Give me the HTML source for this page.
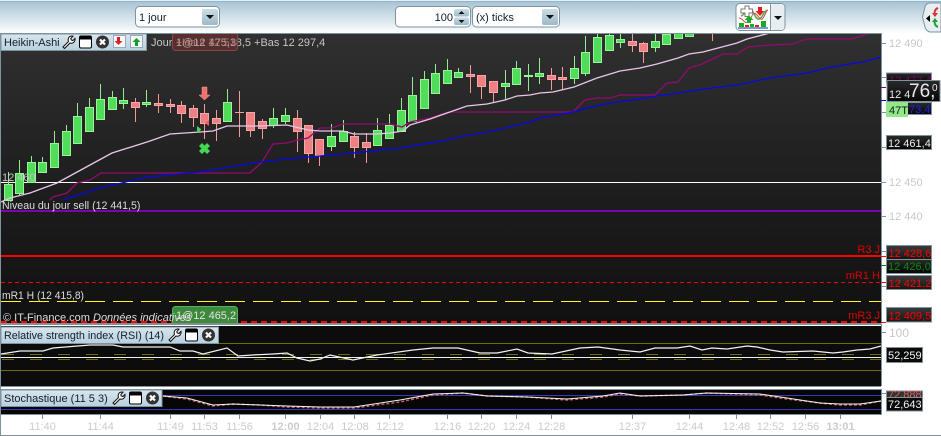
<!DOCTYPE html>
<html><head><meta charset="utf-8"><style>
html,body{margin:0;padding:0;background:#fff;width:941px;height:436px;overflow:hidden}
svg{display:block;font-family:"Liberation Sans",sans-serif;font-size:11px}
.ax{fill:#c9c9c9}.ax2{fill:#cccccc;text-anchor:middle}
.w{fill:#dcdcdc}.r{fill:#ff0000}.t{fill:#10202c}
</style></head><body>
<svg width="941" height="436" viewBox="0 0 941 436" xmlns="http://www.w3.org/2000/svg">
<defs>
<linearGradient id="tb" x1="0" y1="0" x2="0" y2="1"><stop offset="0" stop-color="#a5c0d0"/><stop offset=".5" stop-color="#d0e0e8"/><stop offset="1" stop-color="#fdfefe"/></linearGradient>
<linearGradient id="bg" x1="0" y1="0" x2="0" y2="1"><stop offset="0" stop-color="#303030"/><stop offset=".55" stop-color="#1d1d1d"/><stop offset="1" stop-color="#101010"/></linearGradient>
<linearGradient id="btn" x1="0" y1="0" x2="0" y2="1"><stop offset="0" stop-color="#cbdde7"/><stop offset="1" stop-color="#9db9ca"/></linearGradient>
<linearGradient id="tab" x1="0" y1="0" x2="0" y2="1"><stop offset="0" stop-color="#d8e6ee"/><stop offset="1" stop-color="#b8d0de"/></linearGradient>
<linearGradient id="lb" x1="0" y1="0" x2="0" y2="1"><stop offset="0" stop-color="#2a2a2a"/><stop offset="1" stop-color="#050505"/></linearGradient>
<linearGradient id="lr" x1="0" y1="0" x2="0" y2="1"><stop offset="0" stop-color="#3a3a3a"/><stop offset="1" stop-color="#151515"/></linearGradient>
<g id="wr"><path d="M1 12 L6.500 6.500 C5.500 3.500 7 1 10 1 L11 1.200 L8.800 3.500 L9.200 5 L11 5.500 L13 3.300 C13.500 6.500 11 9 8 8 L2.500 13.500 Z" fill="#fff" stroke="#111" stroke-width="1"/></g>
<g id="wn"><rect x="0.500" y="0.500" width="12" height="12" rx="1.500" fill="#fff" stroke="#000"/><rect x="1" y="1" width="11" height="3" fill="#000"/></g>
<g id="cl"><circle cx="6.500" cy="6.500" r="6.500" fill="#333"/><path d="M4 4L9 9M9 4L4 9" stroke="#fff" stroke-width="2.200"/></g>
</defs>

<!-- toolbar -->
<rect width="941" height="33" fill="url(#tb)"/>
<rect width="941" height="1" fill="#e8f0f4"/>
<rect y="1" width="941" height="1" fill="#8db6d0"/>
<rect x="881" y="33" width="60" height="403" fill="#fff"/>

<rect x="135.500" y="6.500" width="84" height="20.500" rx="4" fill="#fff" stroke="#7f939f"/>
<rect x="202" y="9" width="16" height="16" rx="2" fill="url(#btn)"/>
<path d="M206 15h8l-4 4z" fill="#111"/>
<text x="139" y="21" class="t">1 jour</text>

<rect x="395.500" y="6.500" width="75" height="20.500" rx="4" fill="#fff" stroke="#7f939f"/>
<rect x="454" y="9" width="15" height="7.500" rx="2" fill="url(#btn)"/>
<rect x="454" y="17.500" width="15" height="7.500" rx="2" fill="url(#btn)"/>
<path d="M458.500 14h6l-3-3zM458.500 20h6l-3 3z" fill="#111"/>
<text x="453" y="21" text-anchor="end" class="t">100</text>
<rect x="472.500" y="6.500" width="87" height="20.500" rx="4" fill="#fff" stroke="#7f939f"/>
<rect x="542" y="9" width="16" height="16" rx="2" fill="url(#btn)"/>
<path d="M546 15h8l-4 4z" fill="#111"/>
<text x="476" y="21" class="t">(x) ticks</text>

<rect x="736" y="3.500" width="49" height="27" rx="4" fill="#fff" stroke="#7f939f"/>
<rect x="771" y="4" width="13.500" height="26" rx="3" fill="#e6eef2"/>
<path d="M770.500 4v26" stroke="#7f939f"/>
<path d="M774 16h8l-4 4z" fill="#111"/>
<path d="M741 16c4-1 5-8 9-7s5 11 9 10 4-8 9-9" fill="none" stroke="#56b04e" stroke-width="1.600"/>
<path d="M739 18c4 0 5 6 9 4s4-13 9-7 5 7 10-5" fill="none" stroke="#d05050" stroke-width="1"/>
<path d="M741 9h4V6h4v3h3.500v4H749v3.500h-4V13h-4z" fill="#fff" stroke="#777"/>
<path d="M758 11V7h4v4h2.500l-4.500 5-4.500-5z" fill="#e02020"/>
<path d="M747 23v-3h-2.500l4.500-4.500 4.500 4.500H751v3z" fill="#10b020"/>
<path d="M739 23h5v4h-5zM750 24h4v3h-4zM761 21h5v6h-5z" fill="#10b020"/><path d="M745 25h4v2h-4zM755 25h4v2h-4z" fill="#e02020"/>
<rect x="738" y="27.500" width="30" height="1" fill="#0030a0"/>

<path d="M941 3h-11q-4 0-5 4l-2.500 10 2.500 10q1 4 5 5h11z" fill="#e6eef2" stroke="#7f939f"/>
<path d="M930 15v7l-4-3.500z" fill="#000"/>
<path d="M938 8c-3 1-4 4-3 8" fill="none" stroke="#e03030" stroke-width="2"/><path d="M932 13h6l-3 4z" fill="#e03030"/>
<path d="M938 27c-3-1-4-4-3-8" fill="none" stroke="#20a030" stroke-width="2"/><path d="M932 22h6l-3-4z" fill="#20a030"/>

<!-- main chart -->
<rect x="1" y="33.500" width="880" height="290" fill="url(#bg)"/>
<path d="M0 33.500H881.500V323.500" fill="none" stroke="#7f939f"/>
<rect x="0" y="33" width="1" height="403" fill="#7f939f"/>

<clipPath id="cc"><rect x="1" y="34" width="880" height="289"/></clipPath>
<g clip-path="url(#cc)">
<path d="M1 182.500H881" stroke="#fff"/>
<path d="M1 211H881" stroke="#8000b4" stroke-width="2"/>
<path d="M1 256H881" stroke="#f00" stroke-width="2"/>
<path d="M1 282.500H881" stroke="#f00" stroke-dasharray="4 3"/>
<path d="M1 301.500H881" stroke="#ffff20" stroke-dasharray="20 8"/>
<path d="M1 322H881" stroke="#f00" stroke-width="2" stroke-dasharray="6 4"/>

<path fill="none" stroke="#8fee8f" d="M8.500 172V200M19.500 160V195M31.500 156V183M42.500 157V173M54.500 131V168M66.500 125V156M77.500 103V144M89.500 98V131M100.500 84V120M112.500 91V110M123.500 88V109M146.500 90V107M227.500 89V122M273.500 108V128M285.500 108V124M331.500 124V151M343.500 120V142M377.500 118V146M389.500 114V139M401.500 98V132M412.500 77V122M424.500 71V109M435.500 64V94M447.500 59V84M458.500 68V78M505.500 70V100M516.500 61V85M528.500 64V91M539.500 58V84M574.500 56V84M585.500 36V76M597.500 34V63M609.500 34V51M620.500 34V48M655.500 34V52M666.500 34V44M678.500 34V39M689.500 34V37"/>
<path fill="none" stroke="#f59a9a" d="M135.500 98V122M158.500 94V113M170.500 99V113M181.500 101V123M193.500 105V127M204.500 104V139M216.500 110V141M239.500 91V137M250.500 112V137M262.500 119V139M297.500 110V152M308.500 125V163M319.500 139V166M354.500 132V158M366.500 133V163M470.500 65V93M481.500 75V99M493.500 81V102M551.500 68V90M562.500 67V90M632.500 34V52M643.500 42V63M712.500 34V41"/>
<path fill="#4fdd5a" stroke="#9af29a" d="M4.500 184.500h8v16h-8zM15.500 173.500h8v20h-8zM27.500 162.500h8v20h-8zM38.500 162.500h8v10h-8zM50.500 143.500h8v24h-8zM62.500 131.500h8v24h-8zM73.500 116.500h8v27h-8zM85.500 107.500h8v24h-8zM96.500 99.500h8v20h-8zM108.500 97.500h8v12h-8zM119.500 100.500h8v3h-8zM142.500 102.500h8v2h-8zM223.500 102.500h8v19h-8zM269.500 118.500h8v7h-8zM281.500 115.500h8v6h-8zM327.500 136.500h8v10h-8zM339.500 131.500h8v10h-8zM373.500 130.500h8v15h-8zM385.500 125.500h8v13h-8zM397.500 110.500h8v21h-8zM408.500 95.500h8v26h-8zM420.500 79.500h8v29h-8zM431.500 73.500h8v20h-8zM443.500 70.500h8v13h-8zM454.500 72.500h8v5h-8zM501.500 83.500h8v3h-8zM512.500 68.500h8v16h-8zM524.500 75.500h8v1h-8zM535.500 73.500h8v3h-8zM570.500 68.500h8v10h-8zM581.500 52.500h8v21h-8zM593.500 37.500h8v25h-8zM605.500 35.500h8v15h-8zM616.500 39.500h8v3h-8zM651.500 41.500h8v6h-8zM662.500 34.500h8v10h-8zM674.500 32.500h8v6h-8zM685.500 32.500h8v4h-8z"/>
<path fill="#ee7f82" stroke="#f8a5a5" d="M131.500 102.500h8v5h-8zM154.500 103.500h8v2h-8zM166.500 104.500h8v2h-8zM177.500 105.500h8v8h-8zM189.500 108.500h8v9h-8zM200.500 113.500h8v10h-8zM212.500 118.500h8v5h-8zM246.500 112.500h8v18h-8zM258.500 121.500h8v7h-8zM293.500 118.500h8v13h-8zM304.500 125.500h8v28h-8zM315.500 139.500h8v16h-8zM350.500 136.500h8v11h-8zM362.500 142.500h8v5h-8zM466.500 74.500h8v2h-8zM477.500 75.500h8v11h-8zM489.500 81.500h8v11h-8zM547.500 75.500h8v4h-8zM558.500 77.500h8v2h-8zM628.500 41.500h8v4h-8zM639.500 43.500h8v8h-8z"/>
<path d="M235 112.500h9" stroke="#f59a9a"/>

<polyline fill="none" stroke="#950a70" stroke-width="1.300" points="50,200 53,197 67,193 77,183 90,180 101,173 250,173 262,162 273,144 287,143 297,140 308,138 320,128 332,128 343,124 390,124 402,127 410,122 430,118 448,112 573,112 585,100 597,98 610,98 620,95 640,95 655,95 667,83 678,82 689,68 702,64 723,54 737,54 748,47 770,45 793,44 806,39 852,39 870,33"/>
<polyline fill="none" stroke="#0808e8" stroke-width="1.300" points="63,200 100,188 143,178 167,175 200,172 230,167 260,162 287,159 320,156 353,153 400,148 448,140 463,136 493,131 530,122 540,118 573,112 587,108 610,103 640,99 657,96 712,88 737,85 770,78 807,73 827,68 867,61 881,57"/>
<polyline fill="none" stroke="#e8c8e8" stroke-width="1.300" points="1,202 10,198 30,193 57,183 90,165 112,153 147,142 170,134 200,132 213,131 227,126 260,126 287,125 308,130 320,131 343,131 354,134 377,134 390,133 403,131 410,125 430,119 447,113 467,106 487,104 505,100 517,96 530,95 540,93 553,92 574,87 597,78 620,71 640,68 657,64 678,58 689,54 703,52 737,43 747,39 770,33"/>

<path d="M202 87h5v8h3l-5.500 5-5.500-5h3z" fill="#f0706c" stroke="#f89a90" stroke-width=".5"/>
<path d="M197 126l4.500 3.500-4.500 3.500z" fill="#40d850"/>
<path d="M209 120l-4 3 4 3z" fill="#ee6060"/>
<path d="M199 146l3-3 2.500 2.500 2.500-2.500 3 3-2.500 2.500 2.500 2.500-3 3-2.500-2.500-2.500 2.500-3-3 2.500-2.500z" fill="#44d854"/>

<text x="2" y="181" fill="#c4c4c4">12 460</text>
<text x="2" y="209" class="w" font-size="10.600">Niveau du jour sell (12 441,5)</text>
<text x="2" y="299" class="w" textLength="82" lengthAdjust="spacingAndGlyphs">mR1 H (12 415,8)</text>
<text x="880" y="253" text-anchor="end" fill="#e00000">R3 J</text>
<text x="880" y="279" text-anchor="end" fill="#e00000">mR1 H</text>
<text x="880" y="319" text-anchor="end" fill="#e00000">mR3 J</text>

<rect x="172.500" y="306.500" width="65" height="20" rx="3" fill="#3d8a3d" stroke="#58b058"/>
<text x="3" y="321" class="w">© IT-Finance.com</text>
<text x="93" y="321" class="w" font-style="italic">Données indicatives</text>
<text x="176" y="319" fill="#e4e4e4">1@12 465,2</text>

<text x="151" y="46" fill="#c6c6c6">Jour +Haut 12 518,5 +Bas 12 297,4</text>
<rect x="172.500" y="30" width="65" height="20.500" rx="3" fill="#7a3030" fill-opacity=".55" stroke="#8a4646"/>
<text x="176" y="46" fill="#b89a9a">1@12 475,3</text>
</g>

<!-- chart tab -->
<rect x="1" y="34" width="145.500" height="16.500" fill="url(#tab)" stroke="#7f939f"/>
<text x="4" y="46" class="t">Heikin-Ashi</text>
<use href="#wr" x="62" y="35"/>
<use href="#wn" x="79" y="35.500"/>
<use href="#cl" x="96" y="35.500"/>
<rect x="113.500" y="35.500" width="12" height="12" fill="#f4f8fa" stroke="#9ab"/>
<path d="M117 37h3v4h2.500l-4 4-4-4h2.500z" fill="#e02020"/>
<rect x="130.500" y="35.500" width="12" height="12" fill="#f4f8fa" stroke="#9ab"/>
<path d="M135 46v-4h-2.500l4-4 4 4h-2.500v4z" fill="#10a020"/>

<!-- RSI -->
<rect x="1" y="326" width="880" height="60" fill="#0c0c0c"/>
<path d="M0 324.500H881.500V386M1 386.500H881" fill="none" stroke="#7f939f"/>
<path d="M1 343.500H881M1 370.500H881" stroke="#6b6b10"/>
<path d="M1 354.500H881M1 359.500H881" stroke="#6b6b10" stroke-dasharray="12 16" stroke-dashoffset="-1"/>
<path d="M1 357.500H881" stroke="#f0f0f0"/>
<polyline fill="none" stroke="#f2f2f2" stroke-width="1.200" points="1,354 20,351 43,351 53,348 90,345 113,345 123,347 170,347 180,351 193,351 203,354 227,348 238,356 253,355 273,354 287,353 297,358 310,361 320,359 330,355 353,360 377,355 413,350 433,348 458,348 480,353 497,353 517,349 528,353 552,354 580,348 598,347 620,350 640,352 655,348 677,348 690,346 702,350 712,348 727,349 747,346 757,347 770,350 783,352 813,351 833,353 843,352 857,350 870,349 881,346"/>
<rect x="1" y="327" width="217.500" height="16.500" fill="url(#tab)" stroke="#7f939f"/>
<text x="4" y="339" class="t" textLength="160" lengthAdjust="spacingAndGlyphs">Relative strength index (RSI) (14)</text>
<use href="#wr" x="168" y="328"/>
<use href="#wn" x="185" y="328.500"/>
<use href="#cl" x="202" y="328.500"/>

<!-- Stochastic -->
<rect x="1" y="389.500" width="880" height="24.500" fill="#060606"/>
<path d="M0 414.500H881.500V389.500H1" fill="none" stroke="#7f939f"/>
<path d="M1 395.500H881M1 409.500H881" stroke="#3a3ab4"/>
<polyline fill="none" stroke="#c06060" stroke-width="1.500" stroke-dasharray="3 2" points="163,396 187,399 213,406 233,404 260,405 287,407 320,408 354,408 400,402 433,395 463,393 487,396 527,397 567,400 603,397 620,394 640,396 683,395 707,393 760,395 787,399 820,403 840,405 860,405 881,401"/>
<polyline fill="none" stroke="#f4f4f4" stroke-width="1" points="163,396 187,398 213,405 233,404 260,405 287,406 320,407 354,407 400,400 433,394 463,393 487,396 527,397 567,399 603,396 620,393 640,396 683,395 707,393 760,394 787,398 820,403 840,404 860,404 881,401"/>
<rect x="1" y="390" width="161" height="16.500" fill="url(#tab)" stroke="#7f939f"/>
<text x="4" y="402" class="t">Stochastique (11 5 3)</text>
<use href="#wr" x="112" y="391"/>
<use href="#wn" x="129" y="391.500"/>
<use href="#cl" x="146" y="391.500"/>

<path d="M0 435.500H941" stroke="#7f939f"/>

<!-- right axis ticks -->
<path fill="none" stroke="#7f939f" d="M881 43.500h5M881 77.500h5M881 112.500h5M881 147.500h5M881 182.500h5M881 216.500h5M881 251.500h5M881 286.500h5M881 332.500h5M881 393.500h5"/>
<text x="889" y="47" class="ax">12 490</text>
<text x="889" y="186" class="ax">12 450</text>
<text x="889" y="220" class="ax">12 440</text>
<text x="889" y="337" class="ax" font-size="12">100</text>
<path d="M881 87.500h5" stroke="#800060"/>
<path d="M881 100.500h5" stroke="#00f"/>
<path d="M881 265.500h5" stroke="#070"/>
<path d="M881 256.500h5M881 282.500h5M881 322.500h5" stroke="#f00"/>

<!-- price labels -->
<rect x="886.500" y="73" width="45" height="10" fill="url(#lb)" stroke="#7f939f"/>
<text x="889" y="84" fill="#800060">12 477,4</text>
<rect x="886.500" y="102.500" width="45" height="12" fill="url(#lb)" stroke="#7f939f"/>
<text x="909" y="113" fill="#2020f0">73,4</text>
<rect x="887" y="80.500" width="53" height="21" fill="url(#lb)" stroke="#7f939f"/>
<text x="889" y="98" fill="#e8e8e8">12 4</text>
<text x="909" y="97" fill="#e8e8e8" font-size="19">76,</text>
<text x="932" y="91" fill="#e8e8e8" font-size="10">0</text>
<rect x="886" y="102" width="22" height="15" fill="#94e68c"/>
<text x="889" y="114" fill="#102010">47T</text>
<rect x="886.500" y="135.500" width="45" height="14" fill="url(#lb)" stroke="#7f939f"/>
<text x="888" y="147" fill="#f0f0f0">12 461,4</text>

<rect x="886.500" y="245.500" width="45" height="14" fill="url(#lr)" stroke="#7f939f"/>
<text x="888.500" y="257" class="r">12 428,6</text>
<rect x="886.500" y="259.500" width="45" height="14" fill="url(#lb)" stroke="#7f939f"/>
<text x="888" y="270" fill="#0c8a0c">12 426,0</text>
<rect x="886.500" y="275.500" width="45" height="14" fill="url(#lr)" stroke="#7f939f"/>
<text x="888.500" y="287" class="r">12 421,2</text>
<rect x="886.500" y="307.500" width="45" height="14.500" fill="url(#lr)" stroke="#7f939f"/>
<text x="888.500" y="319.500" class="r">12 409,5</text>

<rect x="886.500" y="347.500" width="36" height="15" fill="#0a0a0a" stroke="#7f939f"/>
<text x="888" y="359" fill="#f4f4f4">52,259</text>
<rect x="886.500" y="391" width="36" height="8" fill="#333" stroke="#7f939f"/>
<text x="888" y="398" fill="#e06060">72,888</text>
<rect x="886.500" y="397.500" width="36" height="13.500" fill="#0a0a0a" stroke="#7f939f"/>
<text x="888" y="408" fill="#f4f4f4">72,643</text>

<!-- time axis -->
<path fill="none" stroke="#7f939f" d="M42.500 414v5M100.500 414v5M170.500 414v5M204.500 414v5M239.500 414v5M285.500 414v5M320.500 414v5M354.500 414v5M389.500 414v5M447.500 414v5M481.500 414v5M516.500 414v5M551.500 414v5M632.500 414v5M689.500 414v5M736.500 414v5M770.500 414v5M805.500 414v5M840.500 414v5"/>
<g class="ax2" text-anchor="middle">
<text x="42.500" y="430">11:40</text>
<text x="100.500" y="430">11:44</text>
<text x="170.500" y="430">11:49</text>
<text x="204.500" y="430">11:53</text>
<text x="239.500" y="430">11:56</text>
<text x="285.500" y="430" font-weight="bold">12:00</text>
<text x="320.500" y="430">12:04</text>
<text x="355" y="430">12:08</text>
<text x="390" y="430">12:12</text>
<text x="447.500" y="430">12:16</text>
<text x="481.500" y="430">12:20</text>
<text x="516.500" y="430">12:24</text>
<text x="551.500" y="430">12:28</text>
<text x="632.500" y="430">12:37</text>
<text x="689.500" y="430">12:44</text>
<text x="736.500" y="430">12:48</text>
<text x="770.500" y="430">12:52</text>
<text x="805.500" y="430">12:56</text>
<text x="840.500" y="430" font-weight="bold">13:01</text>
</g>
</svg>
</body></html>
